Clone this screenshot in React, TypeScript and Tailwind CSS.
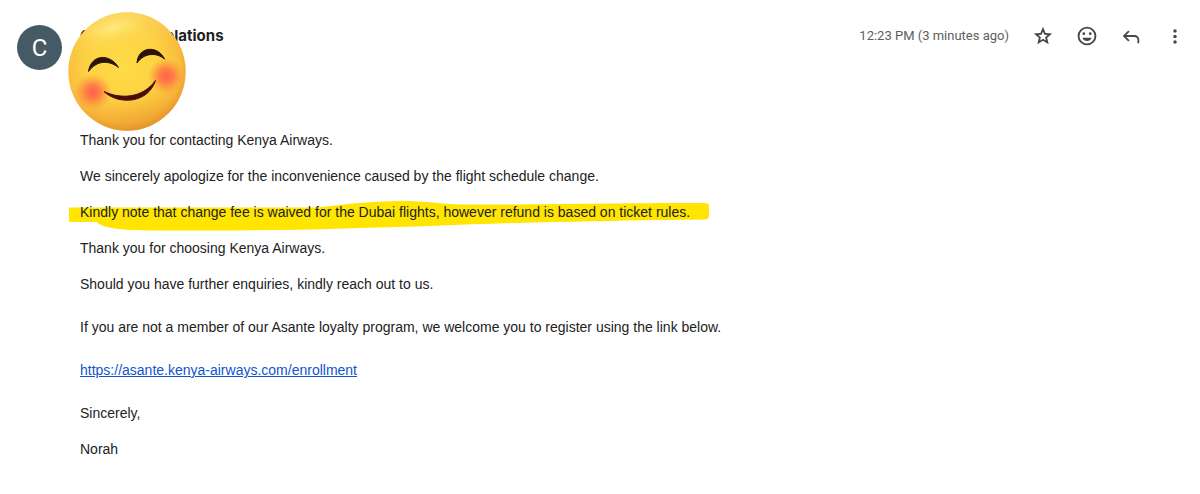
import type { ReactNode } from "react";

function BlushingFace() {
  return (
    <svg
      viewBox="0 0 118 120"
      className="pointer-events-none absolute -left-3 -top-3 h-[120px] w-[118px]"
      role="img"
      aria-label="Smiling face"
    >
      <defs>
        <radialGradient id="face" cx="0.47" cy="0.45" r="0.57">
          <stop offset="0" stopColor="#ffdb46" />
          <stop offset="0.55" stopColor="#fdd242" />
          <stop offset="0.85" stopColor="#f9bd3c" />
          <stop offset="1" stopColor="#e99a2e" />
        </radialGradient>
        <linearGradient id="shade" x1="0.4" y1="0" x2="0.6" y2="1">
          <stop offset="0" stopColor="#fff08a" stopOpacity="0.5" />
          <stop offset="0.35" stopColor="#ffe060" stopOpacity="0" />
          <stop offset="0.65" stopColor="#ee9c30" stopOpacity="0" />
          <stop offset="1" stopColor="#e08424" stopOpacity="0.5" />
        </linearGradient>
        <radialGradient id="shine">
          <stop offset="0" stopColor="#fff6a0" stopOpacity="0.6" />
          <stop offset="1" stopColor="#ffe769" stopOpacity="0" />
        </radialGradient>
        <radialGradient id="blush">
          <stop offset="0" stopColor="#ff5a4c" stopOpacity="0.95" />
          <stop offset="0.4" stopColor="#ff6048" stopOpacity="0.7" />
          <stop offset="1" stopColor="#ff8040" stopOpacity="0" />
        </radialGradient>
      </defs>
      <ellipse cx="59" cy="59.5" rx="58.7" ry="59.2" fill="url(#face)" />
      <ellipse cx="59" cy="59.5" rx="58.7" ry="59.2" fill="url(#shade)" />
      <ellipse cx="45" cy="16" rx="36" ry="13" fill="url(#shine)" transform="rotate(-14 45 16)" />
      <ellipse cx="25" cy="80" rx="19" ry="18" fill="url(#blush)" />
      <ellipse cx="98" cy="64" rx="18" ry="18" fill="url(#blush)" />
      <path d="M20.5 59.5C23 42 42 41 50.5 55.5C41 48 29 48 20.5 59.5Z" fill="#2b1308" stroke="#2b1308" strokeLinejoin="round" />
      <path d="M69 51C70 34 90 33 96.5 47C88 40 76 41 69 51Z" fill="#2b1308" stroke="#2b1308" strokeLinejoin="round" />
      <path d="M36 79.5C52 87 74 87 87.5 68.5C80 92 50 93 36 79.5Z" fill="#4b0d0b" stroke="#4b0d0b" strokeLinejoin="round" />
    </svg>
  );
}

function Marker() {
  return (
    <svg
      viewBox="0 0 642 36"
      className="pointer-events-none absolute -left-3 -top-2 -z-10 h-9 w-[642px] max-w-none"
      aria-hidden="true"
    >
      <path
        d="M1 12.5H248C275 10 300 6 335 6C360 6 370 9 395 9.5C460 10 530 8 637 8Q641 8 641 11V21Q641 24.5 636 24.5C580 25 530 26 488 27C420 28 360 32 290 33C240 35 180 35.500 100 35.500C65 35.500 35 35 29 27H1Z"
        fill="#ffe500"
      />
    </svg>
  );
}

function IconButton({ label, children }: { label: string; children: ReactNode }) {
  return (
    <button type="button" aria-label={label} className="flex size-6 items-center justify-center text-[#444746]">
      <svg viewBox="0 0 24 24" className="size-[22px]" fill="currentColor" aria-hidden="true">
        {children}
      </svg>
    </button>
  );
}

export default function App() {
  return (
    <main className="min-h-screen bg-white pb-9 pl-[17px] pr-[13px] pt-6 font-['Liberation_Sans',Arial,sans-serif] text-[#222222]">
      <article className="flex items-start gap-[18px]">
        <div className="mt-px flex size-[45px] shrink-0 items-center justify-center rounded-full bg-[#455a64] font-[Roboto,sans-serif] text-2xl text-white">
          C
        </div>
        <div className="relative min-w-0 flex-1">
          <header className="flex h-6 items-center justify-between">
            <h2 className="font-[Inter,sans-serif] text-[15px] font-bold text-[#1f1f1f]">Customer Relations</h2>
            <div className="flex items-center gap-[22px]">
              <time className="font-[Roboto,sans-serif] text-[13px] text-[#5e5e5e]">12:23 PM (3 minutes ago)</time>
              <div className="flex items-center gap-5">
                <IconButton label="Star">
                  <path d="m8.85 16.825 3.150-1.900 3.150 1.925-.825-3.600 2.775-2.400-3.650-.325-1.450-3.400-1.450 3.375-3.650.325 2.775 2.425zM5.825 21l1.625-7.025L2 9.250l7.200-.625L12 2l2.800 6.625 7.200.625-5.450 4.725L18.175 21 12 17.275z" />
                </IconButton>
                <IconButton label="Add reaction">
                  <circle cx="12" cy="12" r="9.2" fill="none" stroke="currentColor" strokeWidth="2" />
                  <circle cx="8.5" cy="9.5" r="1.5" />
                  <circle cx="15.5" cy="9.5" r="1.5" />
                  <path d="M7 14h10c-.8 2.300-2.700 3.500-5 3.500s-4.200-1.200-5-3.500z" />
                </IconButton>
                <IconButton label="Reply">
                  <path d="M19 20v-4q0-1.250-.875-2.125T16 13H6.825l3.600 3.600L9 18l-6-6 6-6 1.425 1.400-3.600 3.600H16q2.075 0 3.538 1.463T21 16v4z" />
                </IconButton>
                <IconButton label="More">
                  <circle cx="12" cy="6.5" r="1.9" />
                  <circle cx="12" cy="12.5" r="1.9" />
                  <circle cx="12" cy="18.5" r="1.9" />
                </IconButton>
              </div>
            </div>
          </header>
          <div className="flex flex-col gap-[25px] pt-[83px] text-sm leading-[18px]">
            <div className="flex flex-col gap-[18px]">
              <p>Thank you for contacting Kenya Airways.</p>
              <p>We sincerely apologize for the inconvenience caused by the flight schedule change.</p>
              <p className="relative z-0">
                <Marker />
                Kindly note that change fee is waived for the Dubai flights, however refund is based on ticket rules.
              </p>
              <p>Thank you for choosing Kenya Airways.</p>
              <p>Should you have further enquiries, kindly reach out to us.</p>
            </div>
            <p>If you are not a member of our Asante loyalty program, we welcome you to register using the link below.</p>
            <p>
              <a href="https://asante.kenya-airways.com/enrollment" className="text-[#1155cc] underline">
                https://asante.kenya-airways.com/enrollment
              </a>
            </p>
            <div className="flex flex-col gap-[18px]">
              <p>Sincerely,</p>
              <p>Norah</p>
            </div>
          </div>
          <BlushingFace />
        </div>
      </article>
    </main>
  );
}
